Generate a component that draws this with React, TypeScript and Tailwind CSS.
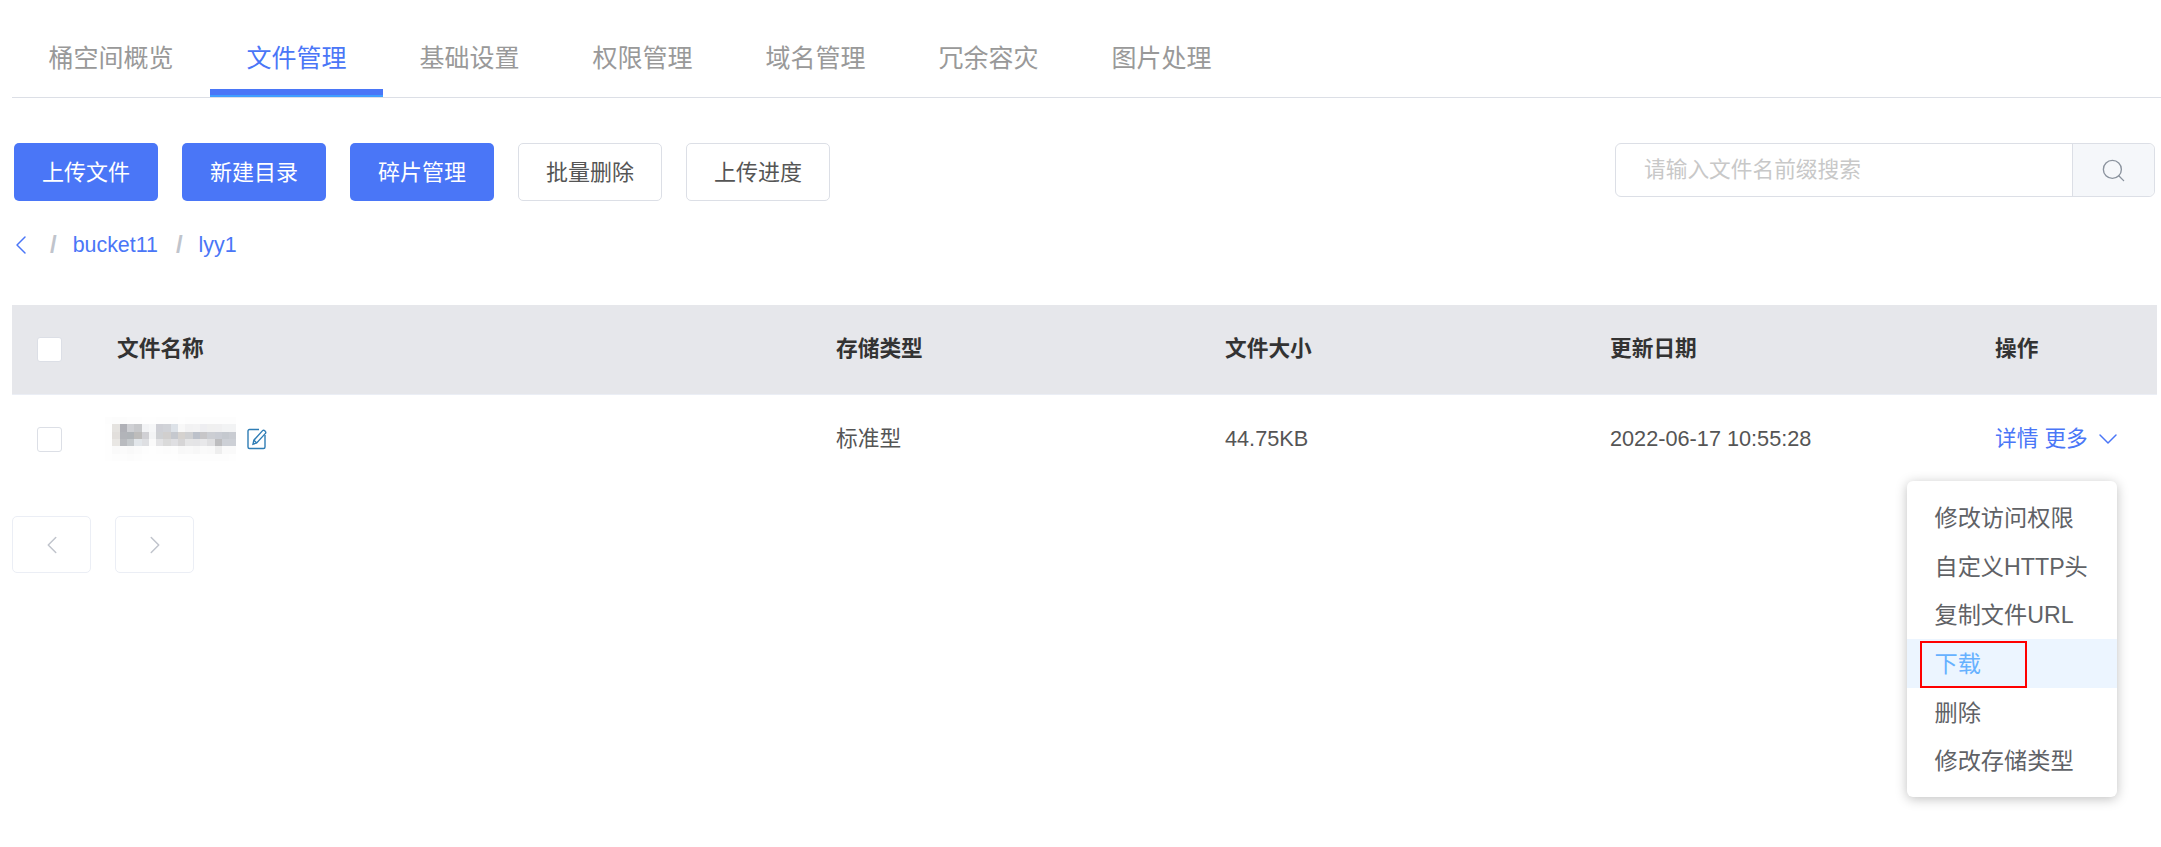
import { ChevronDown, ChevronLeft, ChevronRight, Search } from 'lucide-react';

const tabs = ['桶空间概览', '文件管理', '基础设置', '权限管理', '域名管理', '冗余容灾', '图片处理'];
const menuItems = ['修改访问权限', '自定义HTTP头', '复制文件URL', '下载', '删除', '修改存储类型'];

// blurred file name from the screenshot, left to right, one row per list
const mosaic = [
  ['#fdfdfd', '#fcfcfc', '#fcfcfc', '#fdfdfd', '#fdfdfd', '#fefefe', '#fefefe', '#fdfdfd', '#fdfdfd', '#fdfdfd', '#fefefe', '#fdfdfd', '#fdfdfd', '#fdfdfd', '#fdfdfd', '#fdfdfd', '#fdfdfd', '#fdfdfd'],
  ['#fefefe', '#e5e3e0', '#b0b1b7', '#cfd0d4', '#c7c8cb', '#f2f3f5', '#f6f7f8', '#cfd0d6', '#d1d3d8', '#dde2e8', '#f8f8f8', '#f2f2f3', '#f3f3f4', '#eeeef1', '#f0f0f0', '#f0f0f1', '#f2f3f4', '#f2f3f4'],
  ['#fefefe', '#e2dfdc', '#b2b4b9', '#b0b4b8', '#bdbcbb', '#d0d0d4', '#f3f4f5', '#cfd1d4', '#d1cfce', '#c5c8ce', '#d5d2cf', '#cfd0d2', '#bcc1ca', '#c7c6c8', '#ccced3', '#c9ccd3', '#c5c9cf', '#c9ccd2'],
  ['#fefefe', '#e9e7e4', '#b9bbbf', '#c5c9cc', '#e2e6ea', '#dedfe2', '#fafafa', '#e3e3e5', '#dadada', '#dfdfe2', '#d6d5d6', '#e5e5e6', '#e4e4e6', '#e8e8ea', '#dfdfe1', '#bdbdbf', '#cdd0d6', '#cdd0d6'],
  ['#fefefe', '#fafafa', '#fbfbfb', '#f9f9f9', '#fbfbfb', '#fdfdfd', '#fefefe', '#fdfdfd', '#fcfcfc', '#fdfdfd', '#f8f8f8', '#f9f9f9', '#f7f7f7', '#fafafa', '#f9f9f9', '#eeeeee', '#fafafa', '#fafafa'],
  ['#fefefe', '#fdfdfd', '#fdfdfd', '#fcfcfc', '#fdfdfd', '#fefefe', '#fefefe', '#fefefe', '#fefefe', '#fefefe', '#fdfdfd', '#fdfdfd', '#fdfdfd', '#fdfdfd', '#fdfdfd', '#fdfdfd', '#fdfdfd', '#fefefe'],
];

const EditIcon = () => (
  <svg width="20" height="22" viewBox="0 0 20 22" fill="none" stroke="#2f7db5" strokeWidth="1.4">
    <path d="M12 1.5H2.5a1.5 1.5 0 0 0-1.5 1.5v16a1.5 1.5 0 0 0 1.5 1.5h14a1.5 1.5 0 0 0 1.5-1.5V7" />
    <path d="M6 16.2l.9-4L15.6 2.6a1.3 1.3 0 0 1 1.9 0l.9.9a1.3 1.3 0 0 1 0 1.9L9.7 15z" />
    <path d="M6.9 12.2l2.8 2.8" />
  </svg>
);

const App = () => {
  return (
    <div className="relative h-[847px] w-[2161px] overflow-hidden bg-white font-['Liberation_Sans','Noto_Sans_CJK_SC',sans-serif] text-[21.7px] text-[#555]">
      <div className="ml-3 flex h-[98px] border-b border-[#dcdfe6]">
        {tabs.map((tab, i) => (
          <div
            key={tab}
            className={`flex h-[97px] flex-col justify-between px-[36.5px] pt-[41px] text-[25px] leading-[34px] ${
              i === 1 ? 'border-b-2 border-[#409eff] text-[#4a76f7]' : 'text-[#999]'
            }`}
          >
            <span>{tab}</span>
            {i === 1 && <span className="-mx-[36.5px] h-[6px] bg-[#4a76f7]" />}
          </div>
        ))}
      </div>

      <div className="mt-[45px] flex items-start justify-between pl-[14px] pr-[6px]">
        <div className="flex gap-6 text-[22px]">
          {['上传文件', '新建目录', '碎片管理'].map((label) => (
            <button key={label} className="h-[58px] w-[144px] rounded-[5px] bg-[#4a76f7] text-white">
              {label}
            </button>
          ))}
          {['批量删除', '上传进度'].map((label) => (
            <button key={label} className="h-[58px] w-[144px] rounded-[5px] border border-[#dcdfe6] bg-white text-[#555]">
              {label}
            </button>
          ))}
        </div>
        <div className="flex h-[54px] w-[540px] rounded-[6px] border border-[#dcdfe6]">
          <div className="flex flex-1 items-center pl-[28px] text-[#c8c8c8]">请输入文件名前缀搜索</div>
          <div className="flex w-[82px] items-center justify-center rounded-r-[6px] border-l border-[#dcdfe6] bg-[#f5f7fa]">
            <Search className="h-[27px] w-[27px] text-[#8b939e]" strokeWidth={1.2} />
          </div>
        </div>
      </div>

      <div className="mt-[29px] flex h-[30px] items-center pl-[5px] text-[21.4px] text-[#4a76f7]">
        <ChevronLeft className="h-[32px] w-[32px]" strokeWidth={1.1} />
        <span className="ml-[13px] text-[24px] font-bold text-[#c0c4cc]">/</span>
        <span className="ml-[16px]">bucket11</span>
        <span className="ml-[18px] text-[24px] font-bold text-[#c0c4cc]">/</span>
        <span className="ml-[16px]">lyy1</span>
      </div>

      <div className="ml-3 mr-[4px] mt-[45px]">
        <div className="flex h-[90px] items-center border-b border-[#ebeef5] bg-[#e6e7eb] font-bold text-[#333]">
          <span className="ml-[25px] h-[25px] w-[25px] rounded-[3px] border border-[#dcdfe6] bg-white" />
          <span className="ml-[55px] w-[719px]">文件名称</span>
          <span className="w-[389px]">存储类型</span>
          <span className="w-[385px]">文件大小</span>
          <span className="w-[385px]">更新日期</span>
          <span>操作</span>
        </div>
        <div className="flex h-[88px] items-center">
          <span className="ml-[25px] h-[25px] w-[25px] rounded-[3px] border border-[#dcdfe6] bg-white" />
          <div className="ml-[43px] flex w-[731px] items-center gap-[11px]">
            <svg width="131" height="44" viewBox="0 0 131 44" shapeRendering="crispEdges">
              {mosaic.map((row, y) =>
                row.map((color, x) => (
                  <rect key={`${x}-${y}`} x={x * 7.3} y={y * 7.3} width="7.4" height="7.4" fill={color} />
                )),
              )}
            </svg>
            <EditIcon />
          </div>
          <span className="w-[389px]">标准型</span>
          <span className="w-[385px]">44.75KB</span>
          <span className="w-[385px]">2022-06-17 10:55:28</span>
          <span className="flex items-center text-[#4a76f7]">
            详情 更多
            <ChevronDown className="ml-[4px] h-[32px] w-[32px]" strokeWidth={1.1} />
          </span>
        </div>
      </div>

      <div className="ml-3 mt-[33px] flex gap-[24px]">
        <button className="flex h-[57px] w-[79px] items-center justify-center rounded-[5px] border border-[#ebeef5] bg-white text-[#c0c4cc]">
          <ChevronLeft className="h-[30px] w-[30px]" strokeWidth={1.2} />
        </button>
        <button className="flex h-[57px] w-[79px] items-center justify-center rounded-[5px] border border-[#ebeef5] bg-white text-[#c0c4cc]">
          <ChevronRight className="h-[30px] w-[30px]" strokeWidth={1.2} />
        </button>
      </div>

      {/* Dropdown menu opened from 更多 */}
      <div className="absolute left-[1907px] top-[481px] w-[210px] rounded-[6px] bg-white py-3 text-[23.2px] text-[#606266] shadow-[0_2px_12px_rgba(0,0,0,0.25)]">
        {menuItems.map((item) => (
          <div
            key={item}
            className={`relative flex h-[48.7px] items-center pl-[27.5px] pt-[2px] ${item === '下载' ? 'bg-[#ecf5ff] text-[#66b1ff]' : ''}`}
          >
            {item}
            {item === '下载' && <span className="absolute bottom-0 left-[13px] top-[2px] w-[107px] border-[2.5px] border-[#ff0000]" />}
          </div>
        ))}
      </div>
    </div>
  );
};

export default App;
